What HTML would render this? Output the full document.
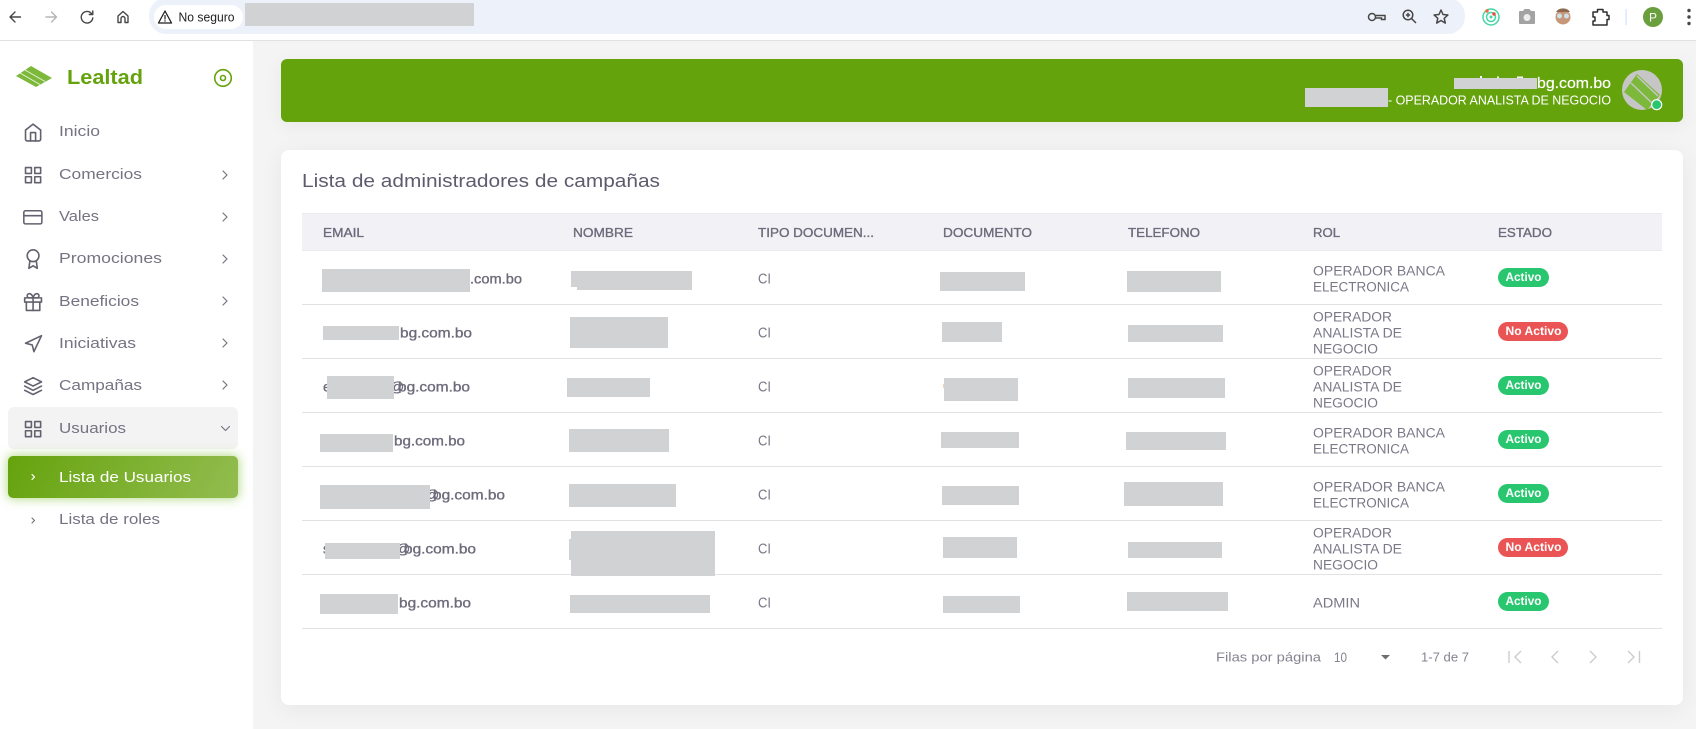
<!DOCTYPE html>
<html lang="es"><head><meta charset="utf-8"><title>Lealtad</title>
<style>
html,body{margin:0;padding:0;width:1696px;height:729px;overflow:hidden;background:#f4f4f4}
.a{position:absolute}
svg{position:absolute;left:0;top:0}
text{font-family:"Liberation Sans",sans-serif}
.m{fill:#767383;font-size:15px}
.h{fill:#6e6b7b;stroke:#6e6b7b;stroke-width:.35;font-size:12.500px}
.e{fill:#6e6b7b;stroke:#6e6b7b;stroke-width:.35;font-size:14px}
.c{fill:#7b7888;font-size:13.500px}
.ci{fill:#7b7888;font-size:14.500px}
.b{fill:#fff;font-size:11.500px;font-weight:bold}
.p{fill:#85838f;font-size:13px}
.ic{fill:none;stroke:#64616f;stroke-width:1.900;stroke-linecap:round;stroke-linejoin:round}
.ch{fill:none;stroke:#77747f;stroke-width:1.200;stroke-linecap:round;stroke-linejoin:round}
.tb{fill:none;stroke:#474747;stroke-width:1.400;stroke-linecap:round;stroke-linejoin:round}
.pg{fill:none;stroke:#cccccc;stroke-width:1.400}
.r{fill:#d1d2d4}
</style></head><body>
<div class="a" style="left:0;top:0;width:1696px;height:40px;background:#fff;border-bottom:1px solid #e1e1e1"></div>
<div class="a" style="left:149px;top:-2px;width:1316px;height:36px;background:#edf2fa;border-radius:17px"></div>
<div class="a" style="left:154px;top:5px;width:89px;height:24px;background:#fff;border-radius:12px"></div>
<div class="a" style="left:0;top:41px;width:253px;height:688px;background:#fff"></div>
<div class="a" style="left:8px;top:407px;width:230px;height:42px;background:#f3f3f3;border-radius:6px"></div>
<div class="a" style="left:8px;top:456px;width:230px;height:42px;background:linear-gradient(118deg,#65a30d,#93bd50);border-radius:5px;box-shadow:0 0 10px 1px rgba(120,190,40,.55)"></div>
<div class="a" style="left:281px;top:59px;width:1402px;height:63px;background:#65a30d;border-radius:6px;box-shadow:0 4px 20px rgba(0,0,0,.05)"></div>
<div class="a" style="left:281px;top:150px;width:1402px;height:555px;background:#fff;border-radius:8px;box-shadow:0 4px 24px rgba(0,0,0,.06)"></div>
<div class="a" style="left:302px;top:213px;width:1360px;height:38px;background:#f2f1f6;border-top:1px solid #ebe9f1;border-bottom:1px solid #ebe9f1;box-sizing:border-box"></div>
<div class="a" style="left:302px;top:304px;width:1360px;height:1px;background:#e2e2e2"></div>
<div class="a" style="left:302px;top:358px;width:1360px;height:1px;background:#e2e2e2"></div>
<div class="a" style="left:302px;top:412px;width:1360px;height:1px;background:#e2e2e2"></div>
<div class="a" style="left:302px;top:466px;width:1360px;height:1px;background:#e2e2e2"></div>
<div class="a" style="left:302px;top:520px;width:1360px;height:1px;background:#e2e2e2"></div>
<div class="a" style="left:302px;top:574px;width:1360px;height:1px;background:#e2e2e2"></div>
<div class="a" style="left:302px;top:628px;width:1360px;height:1px;background:#e2e2e2"></div>

<svg width="1696" height="729" viewBox="0 0 1696 729" xmlns="http://www.w3.org/2000/svg">
<!-- browser left -->
<path class="tb" d="M20.500 17H10M15 12l-5 5 5 5"/>
<path class="tb" style="stroke:#b5b5b5" d="M46 17h10.500M51.500 12l5 5-5 5"/>
<path class="tb" d="M91.500 13.500A5.800 5.800 0 1 0 92.800 18M92.800 11v3.500h-3.500"/>
<path class="tb" d="M118 16l5-4.500 5 4.500v6.500h-3v-4a2 2 0 0 0-4 0v4h-3z"/>
<path fill="none" stroke="#1f1f1f" stroke-width="1.300" stroke-linejoin="round" d="M165 11l6.500 12h-13z"/>
<path stroke="#1f1f1f" stroke-width="1.200" d="M165 15v4.500M165 20.300v1.300"/>
<text x="178.500" y="21.500" font-size="12.500" fill="#1f1f1f" textLength="56" lengthAdjust="spacingAndGlyphs">No seguro</text>
<rect class="r" x="245" y="3" width="229" height="23"/>
<!-- browser right -->
<g fill="none" stroke="#474747" stroke-width="1.500"><circle cx="1372" cy="17" r="3.500"/><path d="M1375.500 15.500h9.500v4h-3.500v-1.500h-6"/>
<circle cx="1408" cy="15" r="4.800"/><path d="M1411.500 18.500l4.500 4.500M1405.800 15h4.400M1408 12.800v4.400"/>
<path stroke-linejoin="round" d="M1441 10l2 4.500 4.900.5-3.700 3.300 1.100 4.800-4.300-2.600-4.300 2.600 1.100-4.800-3.700-3.300 4.900-.5z"/></g>
<g fill="none" stroke="#45d6a8" stroke-width="1.500"><circle cx="1491" cy="17" r="8"/><circle cx="1491" cy="17" r="4.500"/></g>
<circle cx="1491" cy="17" r="1.500" fill="#45d6a8"/><circle cx="1487" cy="11" r="1.700" fill="#ee6a3c"/><circle cx="1494" cy="14" r="1.700" fill="#ee4a3c"/>
<path fill="#a3a3a3" d="M1520 11h3l1.500-2h5l1.500 2h3a1 1 0 0 1 1 1v11a1 1 0 0 1-1 1h-14a1 1 0 0 1-1-1V12a1 1 0 0 1 1-1z"/><circle cx="1527" cy="17.500" r="3.500" fill="#eee"/>
<circle cx="1563" cy="17" r="7.500" fill="#c89678"/><path d="M1556 12a8 7 0 0 1 14 0z" fill="#8d6a4f"/><circle cx="1559.500" cy="16" r="2.500" fill="#cfe2ea"/><circle cx="1566.500" cy="16" r="2.500" fill="#cfe2ea"/>
<path fill="none" stroke="#2f2f2f" stroke-width="1.500" stroke-linejoin="round" d="M1593 12h4.500v-2.500h5.500V12h4v3.500h2v4h-2V25h-14v-4h2v-4h-2z"/>
<rect x="1625.500" y="9" width="1.200" height="16" fill="#d3e3fd"/>
<circle cx="1653" cy="17" r="10" fill="#6a9f3d"/><text x="1653" y="21.500" font-size="12" fill="#fff" text-anchor="middle">P</text>
<circle cx="1689" cy="10.500" r="1.700" fill="#474747"/><circle cx="1689" cy="17" r="1.700" fill="#474747"/><circle cx="1689" cy="23.500" r="1.700" fill="#474747"/>

<!-- logo -->
<path fill="#7cb83a" d="M16 76L31 66 52 78 36 87z"/>
<path stroke="#fff" stroke-width=".9" stroke-opacity=".85" d="M25 70l20 11.500M20 73l20 11.500"/>
<text x="67" y="84" font-size="20.500" font-weight="bold" fill="#65a30d" textLength="76" lengthAdjust="spacingAndGlyphs">Lealtad</text>
<circle cx="223" cy="78" r="8.300" fill="none" stroke="#65a30d" stroke-width="1.600"/><circle cx="223" cy="78" r="2.500" fill="none" stroke="#65a30d" stroke-width="1.600"/>

<!-- menu icons -->
<g class="ic" transform="translate(23,122.500) scale(.84)"><path d="M3 9l9-7 9 7v11a2 2 0 0 1-2 2H5a2 2 0 0 1-2-2z"/><path d="M9 22V12h6v10"/></g>
<g class="ic" transform="translate(23,165) scale(.84)"><rect x="3" y="3" width="7" height="7"/><rect x="14" y="3" width="7" height="7"/><rect x="14" y="14" width="7" height="7"/><rect x="3" y="14" width="7" height="7"/></g>
<g class="ic" transform="translate(23,207.500) scale(.82)"><rect x="1" y="4" width="22" height="16" rx="2"/><path d="M1 10h22"/></g>
<g class="ic" transform="translate(23,249) scale(.84)"><circle cx="12" cy="8" r="7"/><path d="M8.210 13.890L7 23l5-3 5 3-1.210-9.120"/></g>
<g class="ic" transform="translate(23,292) scale(.84)"><path d="M20 12v10H4V12"/><rect x="2" y="7" width="20" height="5"/><path d="M12 22V7M12 7H7.500a2.500 2.500 0 0 1 0-5C11 2 12 7 12 7zM12 7h4.500a2.500 2.500 0 0 0 0-5C13 2 12 7 12 7z"/></g>
<g class="ic" transform="translate(23,334) scale(.84)"><path d="M3 11l19-9-9 19-2-8z"/></g>
<g class="ic" transform="translate(23,376) scale(.84)"><path d="M12 2L2 7l10 5 10-5z"/><path d="M2 17l10 5 10-5M2 12l10 5 10-5"/></g>
<g class="ic" transform="translate(23,419) scale(.84)"><rect x="3" y="3" width="7" height="7"/><rect x="14" y="3" width="7" height="7"/><rect x="14" y="14" width="7" height="7"/><rect x="3" y="14" width="7" height="7"/></g>

<!-- menu text -->
<text class="m" x="59" y="136" textLength="41" lengthAdjust="spacingAndGlyphs">Inicio</text>
<text class="m" x="59" y="179" textLength="83" lengthAdjust="spacingAndGlyphs">Comercios</text>
<text class="m" x="59" y="221" textLength="40" lengthAdjust="spacingAndGlyphs">Vales</text>
<text class="m" x="59" y="263" textLength="103" lengthAdjust="spacingAndGlyphs">Promociones</text>
<text class="m" x="59" y="306" textLength="80" lengthAdjust="spacingAndGlyphs">Beneficios</text>
<text class="m" x="59" y="348" textLength="77" lengthAdjust="spacingAndGlyphs">Iniciativas</text>
<text class="m" x="59" y="390" textLength="83" lengthAdjust="spacingAndGlyphs">Campañas</text>
<text class="m" x="59" y="433" textLength="67" lengthAdjust="spacingAndGlyphs">Usuarios</text>
<text class="m" x="59" y="482" style="fill:#fff" textLength="132" lengthAdjust="spacingAndGlyphs">Lista de Usuarios</text>
<text class="m" x="59" y="524" textLength="101" lengthAdjust="spacingAndGlyphs">Lista de roles</text>
<path class="ch" d="M223 171l4 4-4 4M223 213l4 4-4 4M223 255l4 4-4 4M223 297l4 4-4 4M223 339l4 4-4 4M223 381l4 4-4 4"/>
<path class="ch" d="M221.500 426.500l4 4 4-4"/>
<path class="ch" style="stroke:#fff" d="M32 474.500l2.500 2.500-2.500 2.500"/>
<path class="ch" d="M32 518l2.500 2.500-2.500 2.500"/>

<!-- banner -->
<rect fill="#fff" x="1480" y="76" width="2" height="2.500"/><rect fill="#fff" x="1497" y="76.500" width="2" height="2"/><rect fill="#fff" x="1517" y="76.500" width="6" height="2"/>
<rect class="r" x="1454" y="78" width="83" height="11"/>
<text x="1537" y="88" font-size="15" fill="#fff" stroke="#fff" stroke-width=".2" textLength="74" lengthAdjust="spacingAndGlyphs">bg.com.bo</text>
<rect class="r" x="1305" y="88" width="83" height="19"/>
<text x="1388" y="104.500" font-size="13" fill="#fff" textLength="223" lengthAdjust="spacingAndGlyphs">- OPERADOR ANALISTA DE NEGOCIO</text>
<circle cx="1642" cy="90" r="20" fill="#c6c6c6"/>
<clipPath id="av"><circle cx="1642" cy="90" r="20"/></clipPath>
<g clip-path="url(#av)"><path fill="#7cb83a" d="M1624 92l13-18 23 21-13 15z"/><path stroke="#c6c6c6" stroke-width="1.500" d="M1631 83l21 20M1637 76l21 20"/></g>
<circle cx="1656.700" cy="104.700" r="5" fill="#28c76f" stroke="#fff" stroke-width="1.200"/>

<!-- card title -->
<text x="302" y="187" font-size="18" fill="#5e5b6e" textLength="358" lengthAdjust="spacingAndGlyphs">Lista de administradores de campañas</text>

<!-- header -->
<text class="h" x="323" y="237" textLength="41" lengthAdjust="spacingAndGlyphs">EMAIL</text>
<text class="h" x="573" y="237" textLength="60" lengthAdjust="spacingAndGlyphs">NOMBRE</text>
<text class="h" x="758" y="237" textLength="116" lengthAdjust="spacingAndGlyphs">TIPO DOCUMEN...</text>
<text class="h" x="943" y="237" textLength="89" lengthAdjust="spacingAndGlyphs">DOCUMENTO</text>
<text class="h" x="1128" y="237" textLength="72" lengthAdjust="spacingAndGlyphs">TELEFONO</text>
<text class="h" x="1313" y="237" textLength="27" lengthAdjust="spacingAndGlyphs">ROL</text>
<text class="h" x="1498" y="237" textLength="54" lengthAdjust="spacingAndGlyphs">ESTADO</text>

<!-- email cells -->
<rect class="r" x="322" y="269" width="148" height="23"/>
<text class="e" x="470" y="283.500" textLength="52" lengthAdjust="spacingAndGlyphs">.com.bo</text>
<rect class="r" x="323" y="326" width="76" height="14"/>
<text class="e" x="400" y="337.500" textLength="72" lengthAdjust="spacingAndGlyphs">bg.com.bo</text>
<text class="e" x="323" y="391.500">e</text>
<text class="e" x="390" y="391.500">@</text>
<rect class="r" x="327" y="376" width="67" height="23"/>
<text class="e" x="398" y="391.500" textLength="72" lengthAdjust="spacingAndGlyphs">bg.com.bo</text>
<rect class="r" x="320" y="434" width="73" height="18"/>
<text class="e" x="394" y="445.500" textLength="71" lengthAdjust="spacingAndGlyphs">bg.com.bo</text>
<text class="e" x="425" y="499.500">@</text>
<rect class="r" x="320" y="485" width="110" height="24"/>
<text class="e" x="433" y="499.500" textLength="72" lengthAdjust="spacingAndGlyphs">bg.com.bo</text>
<text class="e" x="323" y="553.500">s</text>
<text class="e" x="396" y="553.500">@</text>
<rect class="r" x="325" y="543" width="75" height="16"/>
<text class="e" x="404" y="553.500" textLength="72" lengthAdjust="spacingAndGlyphs">bg.com.bo</text>
<text class="e" x="399" y="607.500" textLength="72" lengthAdjust="spacingAndGlyphs">bg.com.bo</text>
<rect class="r" x="320" y="594" width="78" height="20"/>

<!-- name cells -->
<rect class="r" x="571" y="271" width="121" height="16"/><rect class="r" x="577" y="287" width="115" height="3"/>
<rect class="r" x="570" y="317" width="98" height="31"/>
<rect class="r" x="567" y="378" width="83" height="19"/>
<rect class="r" x="569" y="429" width="100" height="23"/>
<rect class="r" x="569" y="484" width="107" height="23"/>
<rect class="r" x="571" y="531" width="144" height="45"/><rect class="r" x="569" y="539" width="2" height="21"/>
<rect class="r" x="570" y="595" width="140" height="18"/>

<!-- tipo -->
<text class="ci" x="758" y="283.500" textLength="13" lengthAdjust="spacingAndGlyphs">CI</text>
<text class="ci" x="758" y="337.500" textLength="13" lengthAdjust="spacingAndGlyphs">CI</text>
<text class="ci" x="758" y="391.500" textLength="13" lengthAdjust="spacingAndGlyphs">CI</text>
<text class="ci" x="758" y="445.500" textLength="13" lengthAdjust="spacingAndGlyphs">CI</text>
<text class="ci" x="758" y="499.500" textLength="13" lengthAdjust="spacingAndGlyphs">CI</text>
<text class="ci" x="758" y="553.500" textLength="13" lengthAdjust="spacingAndGlyphs">CI</text>
<text class="ci" x="758" y="607.500" textLength="13" lengthAdjust="spacingAndGlyphs">CI</text>

<!-- documento -->
<rect class="r" x="940" y="272" width="85" height="19"/>
<rect class="r" x="942" y="322" width="60" height="20"/>
<rect x="943" y="384" width="2" height="4" fill="#f3d3b0"/>
<rect class="r" x="944" y="378" width="74" height="23"/>
<rect class="r" x="941" y="432" width="78" height="16"/>
<rect class="r" x="942" y="486" width="77" height="19"/>
<rect class="r" x="943" y="537" width="74" height="21"/>
<rect class="r" x="943" y="596" width="77" height="17"/>

<!-- telefono -->
<rect class="r" x="1127" y="271" width="94" height="21"/>
<rect class="r" x="1128" y="325" width="95" height="17"/>
<rect class="r" x="1128" y="378" width="97" height="20"/>
<rect class="r" x="1126" y="432" width="100" height="18"/>
<rect class="r" x="1124" y="482" width="99" height="24"/>
<rect class="r" x="1128" y="542" width="94" height="16"/>
<rect class="r" x="1127" y="592" width="101" height="19"/>

<!-- rol -->
<text class="c" x="1313" y="275.500" textLength="132" lengthAdjust="spacingAndGlyphs">OPERADOR BANCA</text>
<text class="c" x="1313" y="291.500" textLength="96" lengthAdjust="spacingAndGlyphs">ELECTRONICA</text>
<text class="c" x="1313" y="321.500" textLength="79" lengthAdjust="spacingAndGlyphs">OPERADOR</text>
<text class="c" x="1313" y="337.500" textLength="89" lengthAdjust="spacingAndGlyphs">ANALISTA DE</text>
<text class="c" x="1313" y="353.500" textLength="65" lengthAdjust="spacingAndGlyphs">NEGOCIO</text>
<text class="c" x="1313" y="375.500" textLength="79" lengthAdjust="spacingAndGlyphs">OPERADOR</text>
<text class="c" x="1313" y="391.500" textLength="89" lengthAdjust="spacingAndGlyphs">ANALISTA DE</text>
<text class="c" x="1313" y="407.500" textLength="65" lengthAdjust="spacingAndGlyphs">NEGOCIO</text>
<text class="c" x="1313" y="437.500" textLength="132" lengthAdjust="spacingAndGlyphs">OPERADOR BANCA</text>
<text class="c" x="1313" y="453.500" textLength="96" lengthAdjust="spacingAndGlyphs">ELECTRONICA</text>
<text class="c" x="1313" y="491.500" textLength="132" lengthAdjust="spacingAndGlyphs">OPERADOR BANCA</text>
<text class="c" x="1313" y="507.500" textLength="96" lengthAdjust="spacingAndGlyphs">ELECTRONICA</text>
<text class="c" x="1313" y="537.500" textLength="79" lengthAdjust="spacingAndGlyphs">OPERADOR</text>
<text class="c" x="1313" y="553.500" textLength="89" lengthAdjust="spacingAndGlyphs">ANALISTA DE</text>
<text class="c" x="1313" y="569.500" textLength="65" lengthAdjust="spacingAndGlyphs">NEGOCIO</text>
<text class="c" x="1313" y="607.500" textLength="47" lengthAdjust="spacingAndGlyphs">ADMIN</text>

<!-- estado -->
<g><rect x="1498" y="268" width="51" height="19" rx="9.500" fill="#28c76f"/><text class="b" x="1505.500" y="281" textLength="36" lengthAdjust="spacingAndGlyphs">Activo</text></g>
<g><rect x="1498" y="322" width="70" height="19" rx="9.500" fill="#ea5455"/><text class="b" x="1505.500" y="335" textLength="56" lengthAdjust="spacingAndGlyphs">No Activo</text></g>
<g><rect x="1498" y="376" width="51" height="19" rx="9.500" fill="#28c76f"/><text class="b" x="1505.500" y="389" textLength="36" lengthAdjust="spacingAndGlyphs">Activo</text></g>
<g><rect x="1498" y="430" width="51" height="19" rx="9.500" fill="#28c76f"/><text class="b" x="1505.500" y="443" textLength="36" lengthAdjust="spacingAndGlyphs">Activo</text></g>
<g><rect x="1498" y="484" width="51" height="19" rx="9.500" fill="#28c76f"/><text class="b" x="1505.500" y="497" textLength="36" lengthAdjust="spacingAndGlyphs">Activo</text></g>
<g><rect x="1498" y="538" width="70" height="19" rx="9.500" fill="#ea5455"/><text class="b" x="1505.500" y="551" textLength="56" lengthAdjust="spacingAndGlyphs">No Activo</text></g>
<g><rect x="1498" y="592" width="51" height="19" rx="9.500" fill="#28c76f"/><text class="b" x="1505.500" y="605" textLength="36" lengthAdjust="spacingAndGlyphs">Activo</text></g>

<!-- pagination -->
<text class="p" x="1216" y="661.500" textLength="105" lengthAdjust="spacingAndGlyphs">Filas por página</text>
<text class="p" x="1334" y="662" style="font-size:14px" textLength="13" lengthAdjust="spacingAndGlyphs">10</text>
<path fill="#6e6e6e" d="M1381 655h9l-4.500 4.500z"/>
<text class="p" x="1421" y="661.500" textLength="48" lengthAdjust="spacingAndGlyphs">1-7 de 7</text>
<path class="pg" d="M1509 651v12M1521 651l-6 6 6 6M1558 651l-6 6 6 6M1590 651l6 6-6 6M1628 651l6 6-6 6M1639.500 651v12"/>
</svg>
</body></html>
